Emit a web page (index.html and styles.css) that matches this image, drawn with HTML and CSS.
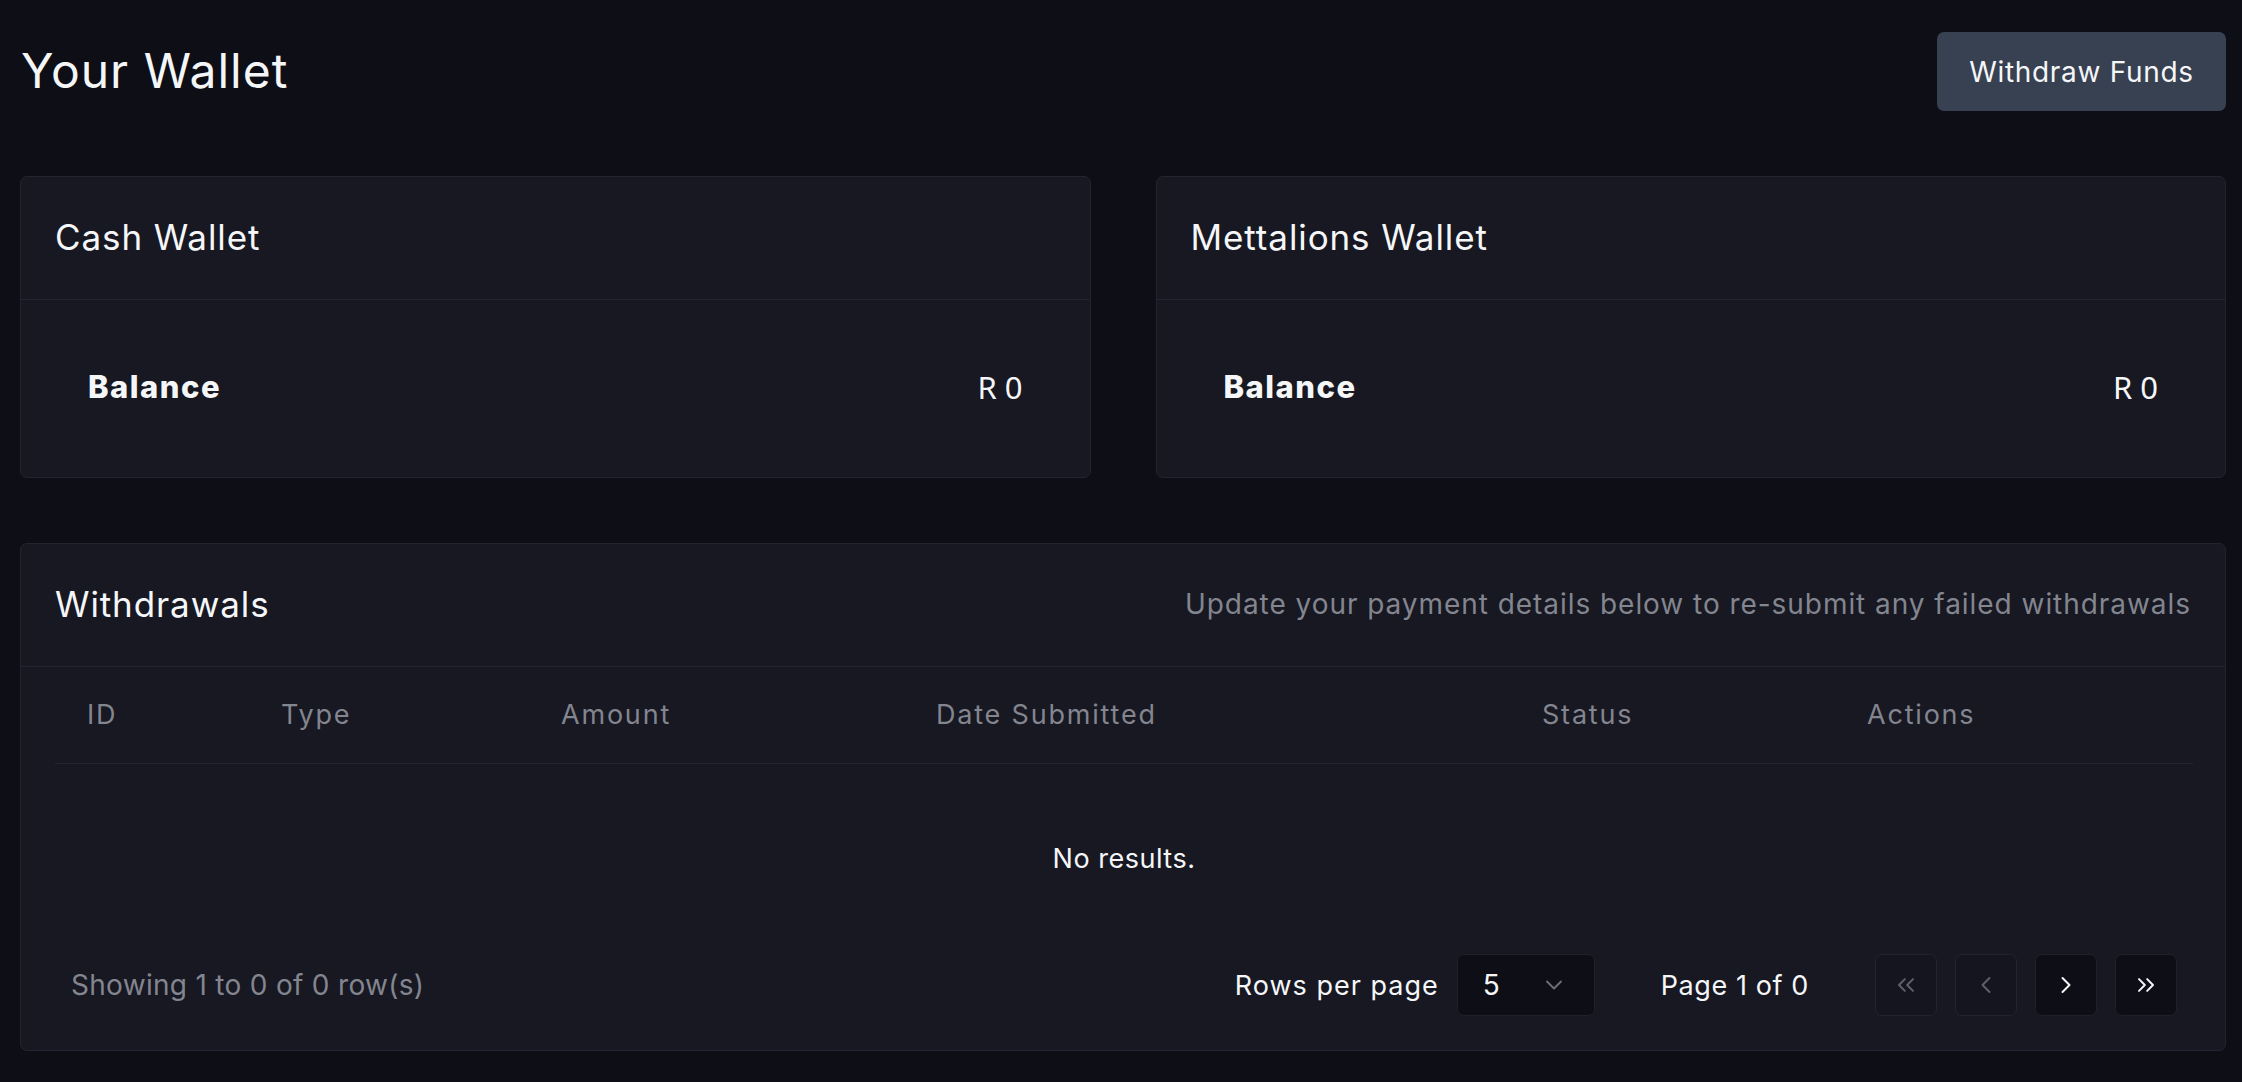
FILE: index.html
```html
<!DOCTYPE html>
<html lang="en">
<head>
<meta charset="utf-8">
<title>Your Wallet</title>
<link rel="stylesheet" href="styles.css">
</head>
<body>
<div class="page">
  <header class="top">
    <h1 class="page-title">Your Wallet</h1>
    <button class="btn-primary">Withdraw Funds</button>
  </header>

  <section class="wallets">
    <div class="card">
      <div class="card-head"><h2 class="card-title">Cash Wallet</h2></div>
      <div class="balance">
        <span class="bal-label">Balance</span>
        <span class="bal-value">R 0</span>
      </div>
    </div>
    <div class="card">
      <div class="card-head"><h2 class="card-title">Mettalions Wallet</h2></div>
      <div class="balance">
        <span class="bal-label">Balance</span>
        <span class="bal-value">R 0</span>
      </div>
    </div>
  </section>

  <section class="card withdrawals">
    <div class="card-head split">
      <h2 class="card-title">Withdrawals</h2>
      <p class="subtitle">Update your payment details below to re-submit any failed withdrawals</p>
    </div>
    <div class="table-wrap">
      <table class="data">
        <colgroup>
          <col class="c-id"><col class="c-type"><col class="c-amount"><col class="c-date"><col class="c-status"><col class="c-actions">
        </colgroup>
        <thead>
          <tr><th>ID</th><th>Type</th><th>Amount</th><th>Date Submitted</th><th>Status</th><th>Actions</th></tr>
        </thead>
        <tbody>
          <tr><td colspan="6" class="empty">No results.</td></tr>
        </tbody>
      </table>
    </div>
    <div class="footer">
      <span class="showing">Showing 1 to 0 of 0 row(s)</span>
      <div class="pager">
        <span class="pager-label">Rows per page</span>
        <div class="select">
          <span>5</span>
          <svg class="sel-icon" viewBox="0 0 24 24" width="28" height="28" fill="none" stroke="currentColor" stroke-width="1.6" stroke-linecap="round" stroke-linejoin="round"><path d="m6 9 6 6 6-6"/></svg>
        </div>
        <span class="page-info">Page 1 of 0</span>
        <div class="nav">
          <button class="nav-btn disabled"><svg viewBox="0 0 24 24" width="28" height="28" fill="none" stroke="currentColor" stroke-width="1.7" stroke-linecap="round" stroke-linejoin="round"><path d="m11 17-5-5 5-5"/><path d="m18 17-5-5 5-5"/></svg></button>
          <button class="nav-btn disabled"><svg viewBox="0 0 24 24" width="28" height="28" fill="none" stroke="currentColor" stroke-width="1.7" stroke-linecap="round" stroke-linejoin="round"><path d="m15 18-6-6 6-6"/></svg></button>
          <button class="nav-btn"><svg viewBox="0 0 24 24" width="28" height="28" fill="none" stroke="currentColor" stroke-width="1.7" stroke-linecap="round" stroke-linejoin="round"><path d="m9 18 6-6-6-6"/></svg></button>
          <button class="nav-btn"><svg viewBox="0 0 24 24" width="28" height="28" fill="none" stroke="currentColor" stroke-width="1.7" stroke-linecap="round" stroke-linejoin="round"><path d="m6 17 5-5-5-5"/><path d="m13 17 5-5-5-5"/></svg></button>
        </div>
      </div>
    </div>
  </section>
</div>
</body>
</html>
```

FILE: styles.css
```css
* { box-sizing: border-box; }
html, body {
  margin: 0;
  background: #0d0e16;
  color: #f5f6f8;
  font-family: Inter, "Noto Sans", sans-serif;
}
.page {
  padding: 32px 16px 31px 20px;
  display: flex;
  flex-direction: column;
  gap: 65px;
}
.top {
  display: flex;
  justify-content: space-between;
  align-items: center;
  height: 79px;
}
.page-title {
  margin: 0 0 2px;
  font-size: 48px;
  font-weight: 400;
  letter-spacing: 1px;
  padding-left: 1px;
}
.btn-primary {
  width: 289px;
  height: 79px;
  background: #374151;
  color: #f5f6f8;
  border: none;
  border-radius: 7px;
  font-family: Inter, sans-serif;
  font-size: 28px;
  font-weight: 400;
  letter-spacing: 0.7px;
}
.wallets {
  display: grid;
  grid-template-columns: 1fr 1fr;
  gap: 65px;
}
.card {
  background: #171822;
  border: 1px solid #23242f;
  border-radius: 7px;
}
.card-head {
  height: 123px;
  border-bottom: 1px solid #23242f;
  padding: 0 34px 2px;
  display: flex;
  align-items: center;
}
.card-head.split { justify-content: space-between; }
.card-title {
  margin: 0;
  font-size: 35px;
  font-weight: 400;
  letter-spacing: 0.9px;
}
.balance {
  height: 177px;
  padding: 0 67px 4px;
  display: flex;
  justify-content: space-between;
  align-items: center;
}
.bal-label {
  font-size: 31px;
  font-weight: 800;
  letter-spacing: 1.5px;
}
.bal-value {
  font-family: "Noto Sans", sans-serif;
  font-size: 31px;
  font-weight: 400;
}
.subtitle {
  margin: 0;
  color: #83858f;
  font-size: 28px;
  letter-spacing: 0.95px;
}
.table-wrap { padding: 0 34px; }
.data {
  width: 100%;
  border-collapse: collapse;
  table-layout: fixed;
}
.c-id { width: 194px; }
.c-type { width: 280px; }
.c-amount { width: 375px; }
.c-date { width: 606px; }
.c-status { width: 325px; }
.c-actions { width: 358px; }
.data th {
  height: 96px;
  text-align: left;
  padding: 0 0 0 32px;
  color: #83858f;
  font-size: 27px;
  font-weight: 400;
  letter-spacing: 1.8px;
  border-bottom: 1px solid #23242f;
}
.empty {
  height: 191px;
  text-align: center;
  font-size: 27px;
  letter-spacing: 0.5px;
  color: #f5f6f8;
}
.footer {
  height: 62px;
  margin-bottom: 34px;
  padding: 0 48px 0 50px;
  display: flex;
  justify-content: space-between;
  align-items: center;
}
.showing {
  color: #83858f;
  font-size: 28px;
  letter-spacing: 0.3px;
}
.pager {
  display: flex;
  align-items: center;
}
.pager-label { font-size: 27px; letter-spacing: 1px; margin-right: 18px; }
.select {
  flex: none;
  width: 138px;
  height: 62px;
  background: #0e0f16;
  border: 1px solid #1f2029;
  border-radius: 7px;
  display: flex;
  align-items: center;
  justify-content: space-between;
  padding: 0 26px 0 25px;
  font-size: 28px;
  margin-right: 66px;
}
.sel-icon { color: #6c6e78; }
.page-info { font-size: 27px; letter-spacing: 0.6px; margin-right: 66px; }
.nav { display: flex; gap: 18px; }
.nav-btn {
  flex: none;
  width: 62px;
  height: 62px;
  background: #0e0f16;
  border: 1px solid #1f2029;
  border-radius: 7px;
  color: #f5f6f8;
  display: flex;
  align-items: center;
  justify-content: center;
  padding: 0;
}
.nav-btn.disabled {
  background: #14151e;
  border-color: #22232d;
  color: #5e606a;
}
```
